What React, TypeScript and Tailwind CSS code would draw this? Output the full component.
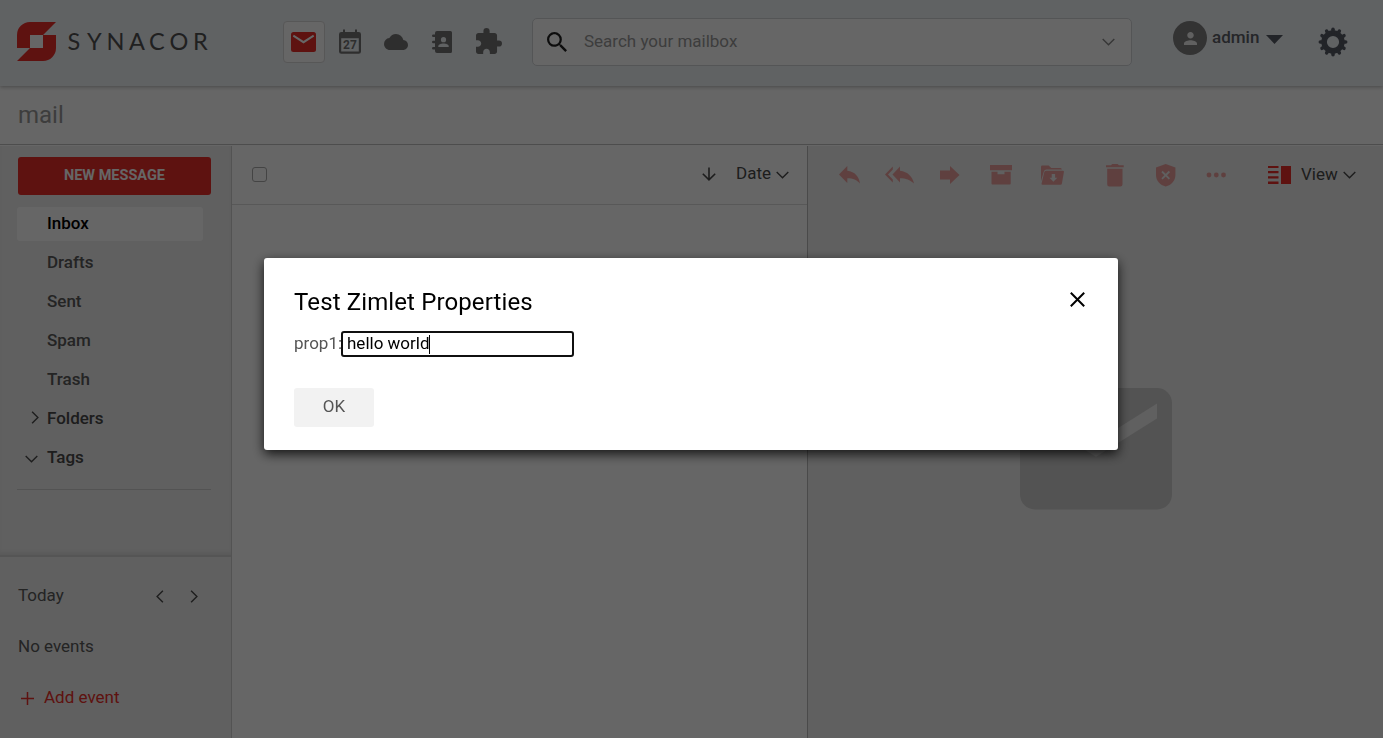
import React from "react";

const cx = (...parts: (string | undefined)[]) => parts.filter(Boolean).join(" ");

type IconProps = { className?: string };

function Chevron({ dir, className }: { dir: "down" | "left" | "right"; className?: string }) {
  const vertical = dir !== "down";
  const d = dir === "down" ? "M.7 .9 6.5 6.7 12.3 .9" : dir === "left" ? "M6.9 .7 1.1 6.5 6.9 12.3" : "M1.1 .7 6.9 6.5 1.1 12.3";
  return (
    <svg
      viewBox={vertical ? "0 0 8 13" : "0 0 13 8"}
      width={vertical ? 8 : 13}
      height={vertical ? 13 : 8}
      className={cx("shrink-0", className)}
      fill="none"
      stroke="currentColor"
      strokeWidth="1.4"
    >
      <path d={d} />
    </svg>
  );
}

function Logo() {
  return (
    <svg width="210" height="40" viewBox="0 0 210 40" className="shrink-0">
      <path d="M13 13h13v13H13z" fill="#fff" />
      <path d="M0 26V13A13 13 0 0 1 13 0h26L26 13H13v13z" fill="#eb2d28" />
      <path d="M39 13v13a13 13 0 0 1-13 13H0l13-13h13V13z" fill="#eb2d28" />
      <text x="50.5 70 89.5 112 132 152.500 176" y="27.6" fontSize="23.5" fill="#505050" className="font-['Lato',sans-serif]">
        SYNACOR
      </text>
    </svg>
  );
}

function CalendarIcon() {
  return (
    <svg width="22" height="25" viewBox="0 0 22 25" className="-mt-[1px] ml-[14px] shrink-0">
      <path
        fillRule="evenodd"
        d="M4 .5h2V3h10V.5h2V3h1.7A2.3 2.3 0 0 1 22 5.300V22.500A2.300 2.300 0 0 1 19.700 24.800H2.300A2.300 2.300 0 0 1 0 22.500V5.300A2.300 2.300 0 0 1 2.300 3H4zM2.200 9.200v13.300h17.600V9.200z"
        fill="#747474"
      />
      <text x="11" y="20" textAnchor="middle" fontSize="12" fontWeight="700" fill="#747474" className="font-['Roboto',sans-serif]">
        27
      </text>
    </svg>
  );
}

function GearIcon() {
  return (
    <svg width="30" height="30" viewBox="-15 -15 30 30" className="ml-[35px] mt-[27px] shrink-0 text-[#555a64]">
      <circle r="8.900" fill="none" stroke="currentColor" strokeWidth="5.600" />
      {Array.from({ length: 12 }, (_, i) => (
        <line key={i} y1="-10" y2="-12.700" stroke="currentColor" strokeWidth="3.500" strokeLinecap="round" transform={`rotate(${i * 30})`} />
      ))}
    </svg>
  );
}

function ReplyIcon({ className }: IconProps) {
  return (
    <svg width="21" height="18" viewBox="0 0 21 18" className={cx("shrink-0", className)} fill="currentColor">
      <path d="M0 8.500 8.300 0v4.800C16 5.600 20 10.800 21 17.500 18 13.800 14 12.200 8.300 12.200V17z" />
    </svg>
  );
}

function Header() {
  return (
    <header className="relative z-10 flex h-[86px] items-start bg-[#f0f4f8] pl-[17px] shadow-[0_1px_4px_rgba(0,0,0,0.300)]">
      <div className="w-[266px] shrink-0 pt-[22px]">
        <Logo />
      </div>
      <nav className="flex h-[42px] w-[249px] shrink-0 items-center pt-0 mt-[21px] text-[#747474]">
        <div className="flex size-[42px] items-center justify-center rounded-[4px] border border-[#dadada] bg-white">
          <svg width="25" height="20" viewBox="0 0 25 20" className="-ml-px">
            <rect width="25" height="20" rx="2.500" fill="#eb2d28" />
            <path d="M2.300 3.700 12.500 10.200 22.700 3.700" fill="none" stroke="#fff" strokeWidth="2" />
          </svg>
        </div>
        <CalendarIcon />
        <svg width="24" height="16" viewBox="0 4 24 16" className="ml-[23px]" fill="currentColor">
          <path d="M19.350 10.040A7.490 7.490 0 0 0 12 4C9.110 4 6.600 5.640 5.350 8.040A5.994 5.994 0 0 0 0 14c0 3.310 2.690 6 6 6h13c2.760 0 5-2.240 5-5 0-2.640-2.050-4.780-4.650-4.960z" />
        </svg>
        <svg width="20" height="23" viewBox="0 0 20 23" className="ml-[24px]" fill="currentColor">
          <path d="M5 0h13.500A1.500 1.500 0 0 1 20 1.500v19a1.500 1.500 0 0 1-1.500 1.500H5a2 2 0 0 1-2-2v-1.500H1.300a1.300 1.300 0 0 1 0-2.600H3V12.300H1.300a1.300 1.300 0 0 1 0-2.600H3V6H1.300a1.300 1.300 0 0 1 0-2.600H3V2a2 2 0 0 1 2-2z" />
          <circle cx="11.500" cy="8.700" r="2.600" fill="#f0f4f8" />
          <path d="M6.300 16v-1c0-1.700 3-2.600 5.200-2.600s5.200.9 5.200 2.600v1z" fill="#f0f4f8" />
        </svg>
        <svg width="26" height="26" viewBox="2 1 21 21" className="ml-[24px] -mt-[2px]" fill="currentColor">
          <path d="M20.500 11H19V7c0-1.100-.9-2-2-2h-4V3.500a2.500 2.500 0 0 0-5 0V5H4c-1.100 0-1.990.9-1.990 2v3.800H3.500c1.490 0 2.700 1.210 2.700 2.700s-1.210 2.700-2.700 2.700H2V20c0 1.100.9 2 2 2h3.800v-1.500c0-1.490 1.210-2.700 2.700-2.700s2.700 1.210 2.700 2.700V22H17c1.100 0 2-.9 2-2v-4h1.500a2.500 2.500 0 0 0 0-5z" />
        </svg>
      </nav>
      <div className="mt-[18px] flex h-[48px] w-[600px] shrink-0 items-center rounded-[5px] border border-[#d2d5d8] bg-white pl-[14px] pr-[16px]">
        <svg width="20" height="20" viewBox="3 3 17.490 17.490" fill="#222">
          <path d="M15.500 14h-.79l-.28-.27A6.471 6.471 0 0 0 16 9.500 6.500 6.500 0 1 0 9.500 16c1.610 0 3.090-.59 4.230-1.570l.27.28v.79l5 4.990L20.490 19l-4.990-5zm-6 0C7.010 14 5 11.990 5 9.500S7.010 5 9.500 5 14 7.010 14 9.500 11.990 14 9.500 14z" />
        </svg>
        <span className="-mt-[2px] ml-[17px] flex-1 text-[17px] leading-5 text-[#999]">Search your mailbox</span>
        <Chevron dir="down" className="text-[#888]" />
      </div>
      <div className="ml-[41px] mt-[21px] flex size-[34px] shrink-0 items-center justify-center rounded-full bg-[#808080]">
        <svg width="13" height="13" viewBox="4 4 16 16" fill="#efefef">
          <path d="M12 12c2.210 0 4-1.790 4-4s-1.790-4-4-4-4 1.790-4 4 1.790 4 4 4zm0 2c-2.670 0-8 1.340-8 4v2h16v-2c0-2.660-5.330-4-8-4z" />
        </svg>
      </div>
      <span className="ml-[5px] mt-[27px] w-[54px] text-[17px] font-medium leading-5 text-[#5c6066]">admin</span>
      <svg width="17" height="9" viewBox="0 0 17 9" className="mt-[35px] shrink-0">
        <path d="M0 0h17L8.500 9z" fill="#555a64" />
      </svg>
      <GearIcon />
    </header>
  );
}

function FolderRow({ label, strong, chevron }: { label: string; strong?: boolean; chevron?: "right" | "down" }) {
  return (
    <li className={cx("flex h-[39px] items-center text-[17px] font-medium leading-5", strong ? "text-[#4a4a4a]" : "text-[#5a5a5a]")}>
      <span className={cx("flex w-[29px] items-center", chevron === "right" ? "pl-[13px]" : "pl-[7px] pt-[5px]")}>
        {chevron && <Chevron dir={chevron} />}
      </span>
      {label}
    </li>
  );
}

function Sidebar() {
  return (
    <aside className="flex w-[232px] shrink-0 flex-col border-r border-[#d0d0d0] bg-[#efefef] text-[17px] leading-5">
      <div className="h-[411px] border-b-2 border-[#d4d4d4] px-[18px] pt-[11px] shadow-[inset_0_-4px_4px_-2px_rgba(0,0,0,0.080)]">
        <div className="flex h-[38px] w-[193px] items-center justify-center rounded-[3px] bg-[#eb2d28] pb-px text-[14.500px] font-bold text-white">
          NEW MESSAGE
        </div>
        <div className="-ml-px mt-[12px] flex h-[34px] w-[186px] items-center rounded-[3px] bg-white pb-[2px] pl-[30px] font-medium text-black">
          Inbox
        </div>
        <ul className="mt-px">
          <FolderRow label="Drafts" />
          <FolderRow label="Sent" />
          <FolderRow label="Spam" />
          <FolderRow label="Trash" />
          <FolderRow label="Folders" strong chevron="right" />
          <FolderRow label="Tags" strong chevron="down" />
        </ul>
        <div className="-ml-px mt-[13px] w-[194px] border-t border-[#d0d0d0]" />
      </div>
      <div className="flex-1 pl-[18px] pt-[28px] text-[#5a5a5a]">
        <div className="flex h-5 items-center">
          <span className="w-[138px]">Today</span>
          <Chevron dir="left" className="mt-[2px] text-[#4a4a4a]" />
          <Chevron dir="right" className="ml-[26px] mt-[2px] text-[#4a4a4a]" />
        </div>
        <div className="mt-[31px]">No events</div>
        <div className="mt-[31px] flex items-center text-[#eb2d28]">
          <svg width="13" height="13" viewBox="0 0 13 13" className="ml-[3px] mr-[10px] mt-[2px]" stroke="currentColor" strokeWidth="1.500">
            <path d="M0 6.500h13M6.500 0v13" />
          </svg>
          Add event
        </div>
      </div>
    </aside>
  );
}

function MessageList() {
  return (
    <section className="w-[576px] shrink-0 border-r border-[#b8b8b8] bg-white">
      <div className="flex h-[59px] items-center border-b border-[#dcdcdc] pl-[20px] text-[17px] leading-5 text-[#4a4a4a]">
        <span className="-mt-[2px] size-[15px] rounded-[3px] border border-[#aaa]" />
        <svg width="14" height="14" viewBox="0 0 14 14" className="-mt-[2px] ml-[435px]" fill="none" stroke="currentColor" strokeWidth="1.600">
          <path d="M7 .5v12M.8 6.700 7 12.800l6.200-6.100" />
        </svg>
        <span className="-mt-[4px] ml-[20px] w-[40px]">Date</span>
        <Chevron dir="down" />
      </div>
    </section>
  );
}

function ReaderToolbar() {
  return (
    <div className="flex h-[59px] items-center pb-px text-[#eb2d28]">
      <div className="flex items-center opacity-40">
        <ReplyIcon className="ml-[31px]" />
        <svg width="29" height="18" viewBox="0 0 29 18" className="ml-[25px]" fill="currentColor">
          <path d="M7.500 8.500 15 .5v4.300c7.700.8 12.500 6 14 12.700C25 13.800 21 12.200 15 12.200v4.300z" />
          <path d="M0 8.500 7.800.5v3L3 8.500l4.800 5v3z" />
        </svg>
        <svg width="20" height="18" viewBox="0 0 20 18" className="ml-[26px]" fill="currentColor">
          <path d="M0 4.600h10V0l9.500 9L10 18v-4.600H0z" />
        </svg>
        <svg width="22" height="20" viewBox="0 0 22 20" className="ml-[30px]" fill="currentColor">
          <path d="M0 0h22v5.300H0zM1.500 6.700h6v2.500h7V6.700h6.200v11.800q0 1-1 1H2.500q-1 0-1-1z" />
        </svg>
        <svg width="23" height="20" viewBox="0 0 23 20" className="ml-[29px]" fill="currentColor">
          <path d="M0 16V1.700Q0 .5 1.200.5h6.500l2.500 2.400h9.300q1.200 0 1.300 1.600H5.500Q3.500 4.500 3 6z" />
          <path fillRule="evenodd" d="M5.500 5.700h16.300q1.300 0 1.100 1.200l-2 11.600q-.2 1.200-1.400 1.200H1.600q-1.300 0-1-1.200L3.300 7Q3.700 5.700 5.500 5.700zM10.700 9v3.800H8.500l3.900 4 3.900-4h-2.200V9z" />
        </svg>
        <svg width="18" height="23" viewBox="0 0 18 23" className="ml-[42px]" fill="currentColor">
          <path d="M0 1.300h5L6.200 0h5.400L13 1.300h4.700v2H0zM1.200 4.800h15.300v15.500q0 2.200-2.200 2.200H3.400q-2.200 0-2.200-2.200z" />
        </svg>
        <svg width="20" height="23" viewBox="0 0 20 23" className="ml-[32px]">
          <path d="M9.700 0 19.400 3.500v7.500c0 5.500-4 10-9.700 11.600C4 21 0 16.500 0 11V3.500z" fill="currentColor" />
          <path d="m6 7.500 7.400 7.400M13.400 7.500 6 14.900" stroke="#efefef" strokeWidth="1.800" />
        </svg>
        <svg width="20" height="6" viewBox="0 0 20 6" className="ml-[30px]" fill="currentColor">
          <circle cx="3" cy="3" r="2.400" />
          <circle cx="10.300" cy="3" r="2.400" />
          <circle cx="17.500" cy="3" r="2.400" />
        </svg>
      </div>
      <svg width="23" height="18" viewBox="0 0 23 18" className="ml-[42px]" fill="currentColor">
        <path d="M0 0h10.500v2H0zM0 5h10.500v2.200H0zM0 10.200h10.500v2.200H0zM0 15.500h10.500v2.500H0zM13 0h10v18H13z" />
      </svg>
      <span className="-mt-[3px] ml-[10px] w-[43px] text-[17px] leading-5 text-[#4a4a4a]">View</span>
      <Chevron dir="down" className="-ml-px text-[#4a4a4a]" />
    </div>
  );
}

function Reader() {
  return (
    <section className="flex-1 bg-[#efefef]">
      <ReaderToolbar />
      <svg width="152" height="122" viewBox="0 0 152 122" className="ml-[212px] mt-[183px]">
        <rect width="152" height="121.500" rx="15" fill="#cfcfcf" />
        <path d="M15 15.500 76 54l61-38.500v15L76 68.800 15 30.500z" fill="#efefef" />
      </svg>
    </section>
  );
}

function PropertiesDialog() {
  return (
    <div className="fixed inset-0 z-20 flex items-start justify-center bg-black/60 pt-[258px]">
      <div role="dialog" className="-ml-px h-[192px] w-[854px] rounded-[3px] bg-white px-[30px] pt-[28px] shadow-[0_4px_12px_rgba(0,0,0,0.800)]">
        <div className="flex h-[32px] items-start justify-between">
          <h2 className="text-[24px] leading-[32px] tracking-[0.120px] text-black">Test Zimlet Properties</h2>
          <svg width="15" height="15" viewBox="0 0 15 15" className="mr-[3px] mt-[6px]" stroke="#000" strokeWidth="2">
            <path d="m.8.8 13.400 13.400M14.200.8.8 14.200" />
          </svg>
        </div>
        <div className="mt-[13px] flex h-[26px] items-center text-[17px] leading-5 text-[#555]">
          <span className="w-[47px] whitespace-nowrap pb-[2px]">prop1:</span>
          <div className="flex h-[26px] w-[233px] items-center rounded-[3px] border-2 border-[#101010] pb-[2px] pl-[4px] text-black">
            hello world
            <span className="-ml-px mt-[2px] h-[19px] w-px bg-black" />
          </div>
        </div>
        <div className="mt-[31px] flex h-[39px] w-[80px] items-center justify-center rounded-[3px] bg-[#f2f2f2] pb-[2px] text-[17px] text-[#555]">
          OK
        </div>
      </div>
    </div>
  );
}

export default function App() {
  return (
    <div className="flex h-[738px] w-[1383px] flex-col overflow-hidden bg-white font-['Roboto',sans-serif]">
      <Header />
      <div className="h-[59px] shrink-0 border-b border-[#c0c0c0] pl-[18px] pt-[13px] text-[24px] leading-[32px] text-[#999]">mail</div>
      <main className="mt-px flex min-h-0 flex-1">
        <Sidebar />
        <MessageList />
        <Reader />
      </main>
      <PropertiesDialog />
    </div>
  );
}
